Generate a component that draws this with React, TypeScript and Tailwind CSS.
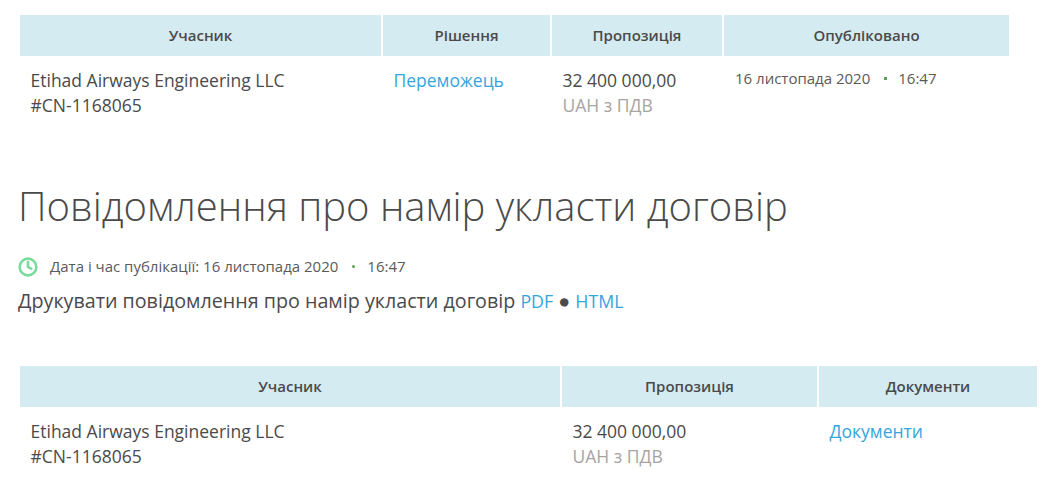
import { Clock } from "lucide-react";

const Participant = () => (
  <div className="px-[10.5px] pt-3 text-[#4a4a4a]">
    <div>Etihad Airways Engineering LLC</div>
    <div>#CN-1168065</div>
  </div>
);

const Offer = () => (
  <div className="px-[10.5px] pt-3">
    <div className="text-[#4a4a4a]">32 400 000,00</div>
    <div className="text-[#a8a4a4]">UAH з ПДВ</div>
  </div>
);

const Head = ({ children }: { children: string }) => (
  <div className="flex h-[41px] items-center justify-center bg-[#d5ebf2] text-[15px] font-semibold text-[#4a4a4a]">
    {children}
  </div>
);

export default function App() {
  return (
    <div
      className="h-[497px] overflow-hidden bg-white pt-[15px] text-[17.5px] leading-[25px]"
      style={{ fontFamily: '"Open Sans", sans-serif' }}
    >
      {/* ── Bids ── */}
      <div className="ml-5 grid w-[989px] grid-cols-[361px_167px_170px_285px] gap-x-[2px]">
        <Head>Учасник</Head>
        <Head>Рішення</Head>
        <Head>Пропозиція</Head>
        <Head>Опубліковано</Head>
        <Participant />
        <div className="px-[10.5px] pt-3 text-[#36a5dc]">Переможець</div>
        <Offer />
        <div className="flex items-start px-[11px] pt-[10px] text-[15px] text-[#5a5a5a]">
          <span>16 листопада 2020</span>
          <span className="mr-[11px] ml-[14px] mt-[11px] h-[3px] w-[3px] bg-[#5c9c5c]" />
          <span>16:47</span>
        </div>
      </div>

      {/* ── Notice ── */}
      <h1 className="ml-[18px] mt-[60px] text-[40px] leading-[56px] font-light text-[#4a4a4a]">
        Повідомлення про намір укласти договір
      </h1>
      <div className="ml-[17.5px] mt-[20px] flex items-center text-[15px] text-[#5a5a5a]">
        <Clock className="mr-[12.5px] h-[20px] w-[20px] text-[#7adc9c]" strokeWidth={3.2} />
        <span>Дата і час публікації: 16 листопада 2020</span>
        <span className="mr-[12px] ml-[14px] h-[3px] w-[3px] rounded-full bg-[#5c9c5c]" />
        <span>16:47</span>
      </div>
      <div className="ml-[18px] mt-[9px] text-[19.7px] text-[#4a4a4a]">
        Друкувати повідомлення про намір укласти договір{" "}
        <span className="text-[17.8px] text-[#36a5dc]">PDF</span> ●{" "}
        <span className="text-[17.8px] text-[#36a5dc]">HTML</span>
      </div>

      {/* ── Documents ── */}
      <div className="ml-5 mt-[52px] grid w-[1017px] grid-cols-[540px_255px_218px] gap-x-[2px]">
        <Head>Учасник</Head>
        <Head>Пропозиція</Head>
        <Head>Документи</Head>
        <Participant />
        <Offer />
        <div className="px-[10.5px] pt-3 text-[#36a5dc]">Документи</div>
      </div>
    </div>
  );
}
